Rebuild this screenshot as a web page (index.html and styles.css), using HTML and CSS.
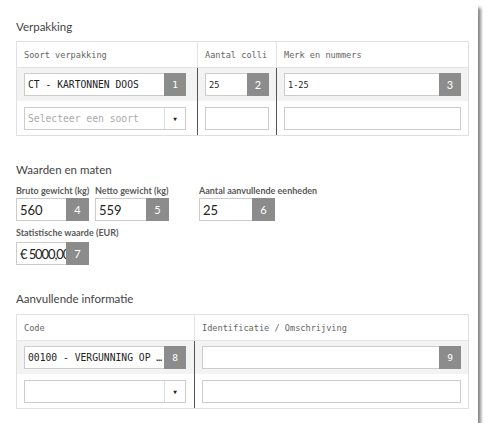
FILE: index.html
```html
<!DOCTYPE html>
<html lang="nl">
<head>
    <meta charset="UTF-8">
    <meta name="viewport" content="width=device-width, initial-scale=1.0">
    <title>Verpakking</title>
    <link rel="stylesheet" href="styles.css">
</head>
<body>

    <div class="card">
        <h3 class="section-title">Verpakking</h3>
        <div class="grid grid-pack">
            <div class="cell head">Soort verpakking</div>
            <div class="cell head split">Aantal colli</div>
            <div class="cell head split">Merk en nummers</div>

            <div class="cell hl wide">
                <div class="field mono"><span class="value">CT - KARTONNEN DOOS</span><span class="badge mono-badge">1</span></div>
            </div>
            <div class="cell hl split">
                <div class="field mono small"><span class="value">25</span><span class="badge">2</span></div>
            </div>
            <div class="cell hl split">
                <div class="field mono small"><span class="value">1-25</span><span class="badge">3</span></div>
            </div>

            <div class="cell wide">
                <div class="field select mono"><span class="value placeholder">Selecteer een soort</span><span class="arrow">&#9660;</span></div>
            </div>
            <div class="cell split">
                <div class="field"></div>
            </div>
            <div class="cell split">
                <div class="field"></div>
            </div>
        </div>

        <h3 class="section-title spaced">Waarden en maten</h3>
        <div class="measures">
            <div class="group g1">
                <label>Bruto gewicht (kg)</label>
                <div class="field num"><span class="value">560</span><span class="badge">4</span></div>
            </div>
            <div class="group g2">
                <label>Netto gewicht (kg)</label>
                <div class="field num"><span class="value">559</span><span class="badge">5</span></div>
            </div>
            <div class="group g3">
                <label>Aantal aanvullende eenheden</label>
                <div class="field num"><span class="value">25</span><span class="badge">6</span></div>
            </div>
        </div>
        <div class="group g1 stat">
            <label>Statistische waarde (EUR)</label>
            <div class="field num"><span class="value tight">&euro; 5000,00</span><span class="badge">7</span></div>
        </div>

        <h3 class="section-title spaced">Aanvullende informatie</h3>
        <div class="grid grid-info">
            <div class="cell head">Code</div>
            <div class="cell head split">Identificatie / Omschrijving</div>

            <div class="cell hl wide2">
                <div class="field mono"><span class="value">00100 - VERGUNNING OP &hellip;</span><span class="badge mono-badge">8</span></div>
            </div>
            <div class="cell hl split">
                <div class="field mono"><span class="value"></span><span class="badge mono-badge">9</span></div>
            </div>

            <div class="cell wide2">
                <div class="field select mono"><span class="value"></span><span class="arrow">&#9660;</span></div>
            </div>
            <div class="cell split">
                <div class="field"></div>
            </div>
        </div>
    </div>

</body>
</html>
```

FILE: styles.css
```css
body {
    margin: 5px;
    background: #fff;
    font-family: Lato, "Open Sans", sans-serif;
    color: #333;
}

.card {
    width: 473px;
    height: 418px;
    box-sizing: border-box;
    padding: 15px 9px 0 11px;
    background: #fff;
    box-shadow: 3px 3px 3px rgba(0, 0, 0, 0.45), 0 0 4px rgba(0, 0, 0, 0.12);
}

.section-title {
    margin: 0 0 7px;
    font-size: 11.5px;
    line-height: 14px;
    font-weight: normal;
    color: #444;
}

.section-title.spaced {
    margin-top: 27px;
    margin-bottom: 8px;
}

/* bordered tables */
.grid {
    display: grid;
    border: 1px solid #e0e0e0;
}

.grid-pack {
    grid-template-columns: 180px 79px 1fr;
}

.grid-info {
    grid-template-columns: 177px 1fr;
}

.cell {
    box-sizing: border-box;
    display: flex;
    align-items: center;
    padding: 0 7px;
    height: 34px;
}

.cell.head {
    height: 26px;
    border-bottom: 1px solid #e4e4e4;
    font-family: "DejaVu Sans Mono", monospace;
    font-size: 8.6px;
    color: #666;
}

.cell.hl {
    height: 33px;
    background: #f3f3f3;
}

.cell.split {
    border-left: 1px solid #555;
}

.cell.head.split {
    border-left: 1px solid #e4e4e4;
}

.cell.wide {
    padding-right: 11px;
}

.cell.wide2 {
    padding-right: 8px;
}

/* input boxes */
.field {
    box-sizing: border-box;
    display: flex;
    align-items: stretch;
    width: 100%;
    height: 23px;
    border: 1px solid #ccc;
    background: #fff;
}

.field .value {
    flex: 1;
    min-width: 0;
    display: flex;
    align-items: center;
    padding-left: 3px;
    white-space: nowrap;
}

.mono {
    font-family: "DejaVu Sans Mono", monospace;
    font-size: 9.7px;
    color: #222;
}

.mono.small {
    font-size: 8.6px;
}

.placeholder {
    color: #aaa;
}

.badge {
    width: 22px;
    margin: -1px -1px -1px 0;
    background: #8c8c8c;
    color: #fff;
    display: flex;
    align-items: center;
    justify-content: center;
    font-family: Lato, sans-serif;
    font-size: 11px;
}

.badge.mono-badge {
    font-family: "DejaVu Sans Mono", monospace;
    font-size: 9.5px;
}

.select .arrow {
    width: 20px;
    border-left: 1px solid #ddd;
    display: flex;
    align-items: center;
    justify-content: center;
    font-size: 6px;
    color: #222;
}

.select .value {
    overflow: hidden;
}

/* weights and values */
.measures {
    display: flex;
}

.group label {
    display: block;
    font-size: 9px;
    line-height: 12px;
    font-weight: bold;
    color: #5a5a5a;
    margin-bottom: 1px;
    white-space: nowrap;
}

.g1 {
    width: 73px;
}

.g2 {
    width: 74px;
    margin-left: 6px;
}

.g3 {
    width: 76px;
    margin-left: 30px;
}

.stat {
    margin-top: 6px;
}

.stat label {
    margin-bottom: 3px;
}

.num {
    font-size: 13px;
    color: #222;
}

.num .badge {
    width: 23px;
}

.num .value.tight {
    letter-spacing: -1.1px;
}
```
